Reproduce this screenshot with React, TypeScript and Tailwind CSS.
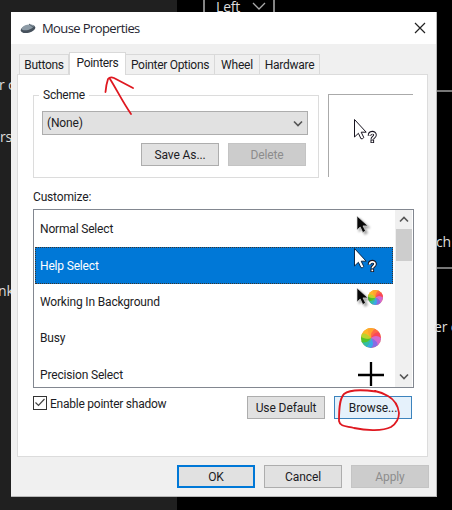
import React from "react";

function HelpCursor({ className = "", dark = false }: { className?: string; dark?: boolean }) {
  return (
    <svg className={className} width="26" height="28" viewBox="0 0 26 28" fill="none">
      <path d="M1.5 1.5V19L5.4 15.3L8 20.8Q10 21 10.8 19.5L8.2 14.2H13.2Z" fill="white" stroke={dark ? "#0c2848" : "#17131f"} strokeWidth="1" />
      <path d="M16.5 17.8C16.5 13.4 22 13.8 22 17C22 19 19.3 19.2 19.3 21.2" stroke="#17131f" strokeWidth="3.6" />
      <path d="M19.3 21.5V25" stroke="#17131f" strokeWidth="3.6" />
      <path d="M16.5 17.5C16.8 14 22 14.2 22 17C22 19 19.3 19.2 19.3 21.3M19.3 22.5V24.3" stroke="white" strokeWidth="1.7" />
    </svg>
  );
}

function Arrow() {
  return (
    <svg width="14" height="19" viewBox="0 0 14 19" className="drop-shadow-[2px_2px_1px_rgba(0,0,0,0.35)]">
      <path d="M1 1V15L4.2 12L6.8 17.5L9.6 16L7 10.9H12Z" fill="#080808" stroke="#dddddd" strokeWidth=".7" />
    </svg>
  );
}

function Wheel({ size }: { size: number }) {
  return (
    <svg width={size} height={size} viewBox="0 0 20 20" className="rounded-full">
      <rect width="20" height="20" fill="#e5a23a" />
      <path d="M10 10Q7 5 9 0H0V7Q5 5 10 10" fill="#ffb727" />
      <path d="M10 10Q10 4 16 0H7Q6 5 10 10" fill="#ffa42e" />
      <path d="M10 10Q13 4 20 5V0H15Q9 4 10 10" fill="#ff6a45" />
      <path d="M10 10Q16 7 20 12V4Q13 3 10 10" fill="#fa4758" />
      <path d="M10 10Q16 12 16 20H20V10Q15 6 10 10" fill="#d468ce" />
      <path d="M10 10Q13 16 9 20H17Q17 12 10 10" fill="#886be5" />
      <path d="M10 10Q9 17 3 18L5 20H10Q14 16 10 10" fill="#39a8e7" />
      <path d="M10 10Q5 16 0 13V20H4Q9 17 10 10" fill="#32bda5" />
      <path d="M10 10Q4 12 0 7V14Q6 16 10 10" fill="#51c52c" />
      <path d="M10 10Q5 4 0 6V9Q5 12 10 10" fill="#bdd22d" />
    </svg>
  );
}

function Chevron({ up = false }: { up?: boolean }) {
  return (
    <svg width="10" height="7" viewBox="0 0 10 7" fill="none">
      <path d={up ? "M1 5.5L5 1.5L9 5.5" : "M1 1.5L5 5.5L9 1.5"} stroke="#555" strokeWidth="1.6" />
    </svg>
  );
}

function Button({ children, className = "border-[#adadad] bg-[#e1e1e1]" }: { children: React.ReactNode; className?: string }) {
  return <button className={`flex h-[23px] w-[78px] shrink-0 items-center justify-center whitespace-nowrap border tracking-[-.1px] ${className}`}>{children}</button>;
}

const background = "absolute whitespace-nowrap font-['Open_Sans',sans-serif] text-[14px] leading-5 text-[#ddd]";

export default function App() {
  return (
    <div className="relative h-[510px] w-[452px] overflow-hidden bg-black font-['Roboto',sans-serif] text-[12px] leading-4 tracking-[-.17px] text-[#1c1c24]">
      <div className="h-full w-[177px] bg-[#202020]" />
      <div className="absolute -top-2 left-[203px] h-8 w-[72px] border-2 border-[#858585]" />
      <span className={`${background} left-[216px] top-[-3px]`}>Left</span>
      <svg className="absolute left-[252px] top-[2px]" width="14" height="9" fill="none"><path d="M1 1L7 7L13 1" stroke="#aaa" strokeWidth="1.3" /></svg>
      <span className={`${background} left-[-1px] top-[75px]`}>r c</span>
      <span className={`${background} left-0 top-[127px]`}>rs</span>
      <span className={`${background} left-[-2px] top-[281px]`}>nk</span>
      <div className="absolute left-[430px] top-[90px] h-[179px] w-10 border-y-2 border-[#777]" />
      <span className={`${background} left-[436px] top-[232px]`}>ch</span>

      <main className="absolute left-[11px] top-[12px] flex h-[485px] w-[426px] flex-col border-b border-r border-[#b9b9b9] bg-[#f0f0f0]">
        <header className="flex h-8 shrink-0 items-center bg-white pl-[9px] pr-[10px]">
          <svg width="16" height="12" viewBox="0 0 16 12">
            <ellipse cx="8" cy="7" rx="7.5" ry="3.8" transform="rotate(-14 8 7)" fill="#46515c" />
            <ellipse cx="7.5" cy="5.5" rx="6.3" ry="2.6" transform="rotate(-14 7 5)" fill="#8d9ba6" />
            <path d="M9 2L13 5" stroke="#53616d" />
          </svg>
          <h1 className="ml-[6px] flex-1 font-['Open_Sans',sans-serif] text-[13px] tracking-[-.6px] text-[#252530]">Mouse Properties</h1>
          <svg width="12" height="12" viewBox="0 0 12 12"><path d="M1 1L11 11M11 1L1 11" stroke="#222" strokeWidth="1.2" /></svg>
        </header>

        <nav className="flex h-[30px] shrink-0 items-end pl-[8px]">
          <div className="flex h-5 w-[50px] items-center justify-center border border-b-0 border-[#d9d9d9] tracking-[-.3px]">Buttons</div>
          <div className="relative z-10 -mb-px flex h-[23px] w-[57px] items-center justify-center border border-b-0 border-[#d9d9d9] bg-white pb-[3px] tracking-[-.3px]">Pointers</div>
          <div className="flex h-5 w-[88px] items-center justify-center whitespace-nowrap border-t border-[#d9d9d9] tracking-[-.3px]">Pointer Options</div>
          <div className="flex h-5 w-[46px] items-center justify-center border border-b-0 border-[#d9d9d9]">Wheel</div>
          <div className="flex h-5 w-[60px] items-center justify-center border border-b-0 border-l-0 border-[#d9d9d9] tracking-[-.25px]">Hardware</div>
        </nav>

        <section className="ml-[6px] flex h-[383px] w-[411px] shrink-0 flex-col border border-[#dcdcdc] bg-white pl-[15px] pt-[12px]">
          <div className="flex">
            <div className="w-[286px]">
              <div className="flex h-[16px] items-center">
                <span className="mt-[1px] h-px w-[6px] bg-[#dcdcdc]" />
                <span className="mx-[4px] tracking-[-.25px]">Scheme</span>
                <span className="mt-[1px] h-px flex-1 bg-[#dcdcdc]" />
              </div>
              <div className="-mt-[7px] h-[82px] border border-t-0 border-[#dcdcdc] px-[8px] pt-[15px]">
                <div className="flex h-6 w-[266px] items-center justify-between border border-[#adadad] bg-[#e1e1e1] pl-[4px] pr-[4px]"><span>(None)</span><Chevron /></div>
                <div className="mt-[8px] flex gap-[9px] pl-[99px]">
                  <Button>Save As...</Button>
                  <Button className="border-[#c4c4c4] bg-[#cccccc] text-[#8c8c8c]">Delete</Button>
                </div>
              </div>
            </div>
            <div className="ml-[9px] mt-[7px] h-[83px] w-[85px] border-l border-t border-[#aaa] pl-[24px] pt-[23px]"><HelpCursor /></div>
          </div>
          <div className="mt-[11px] h-[20px]">Customize:</div>
          <div className="flex h-[179px] w-[381px] border border-[#828790]">
            <div className="min-w-0 flex-1 overflow-hidden py-px pl-[1px] [&>div]:flex [&>div]:h-[36.4px] [&>div]:items-center [&>div]:justify-between [&>div]:pl-[5px]">
              <div><span>Normal Select</span><span className="mb-[10px] mr-[25px]"><Arrow /></span></div>
              <div className="relative w-[358px] border border-dotted border-[#3b342d] bg-[#0078d7] text-white"><span className="-ml-px">Help Select</span><HelpCursor dark className="-mt-[9px] mr-[13px]" /></div>
              <div><span>Working In Background</span><span className="mr-[12px] flex items-center"><span className="mt-[-11px]"><Arrow /></span><span className="-ml-[2px] mt-[-9px]"><Wheel size={15} /></span></span></div>
              <div><span>Busy</span><span className="mr-[14px]"><Wheel size={20} /></span></div>
              <div><span>Precision Select</span><svg className="mr-[11px] mt-[-2px]" width="26" height="24" viewBox="0 0 26 24"><path d="M13 0V24M0 13H26" stroke="#000" strokeWidth="2.3" /></svg></div>
            </div>
            <div className="flex w-[18px] shrink-0 flex-col items-center border-r border-white bg-[#f0f0f0]">
              <div className="flex h-[19px] items-center"><Chevron up /></div>
              <div className="h-8 w-[16px] bg-[#cdcdcd]" />
              <div className="flex flex-1 items-end pb-[7px]"><Chevron /></div>
            </div>
          </div>
          <div className="mt-[8px] flex h-6 items-start">
            <div className="flex size-[14px] items-center justify-center border border-[#333]"><svg width="12" height="12" fill="none"><path d="M1.5 5.5L4.5 8.5L10.5 2" stroke="#444" strokeWidth="1.2" /></svg></div>
            <span className="ml-[3px] w-[197px] tracking-[-.24px]">Enable pointer shadow</span>
            <Button>Use Default</Button>
            <div className="ml-[9px]"><Button className="border-[#3c83bd] bg-[#e5f1fb]">Browse...</Button></div>
          </div>
        </section>
        <footer className="mt-[8px] flex gap-[9px] pl-[166px]">
          <Button className="border-2 border-[#0078d7] bg-[#e1e1e1]">OK</Button>
          <Button>Cancel</Button>
          <Button className="border-[#c4c4c4] bg-[#cccccc] text-[#8c8c8c]">Apply</Button>
        </footer>
      </main>
      <span className={`${background} left-[434px] top-[317px]`}>er c</span>
      <svg className="pointer-events-none absolute inset-0" width="452" height="510" fill="none" stroke="#df1820" strokeWidth="1.8" strokeLinecap="round" strokeLinejoin="round">
        <path d="M105.5 92C106 86 107 82 108 79Q110 76.5 114 78L133 88M110 79C117 90 122 101 131 114" />
        <path d="M376 391.5C365 390 350 389 344 394C339 399 339 412 339 421C340 427 347 426 354 428C367 431 383 431 391 427C397 423 399 419 399 413C398 405 395 400 388 396C383 393 380 392 375 391" />
      </svg>
    </div>
  );
}
